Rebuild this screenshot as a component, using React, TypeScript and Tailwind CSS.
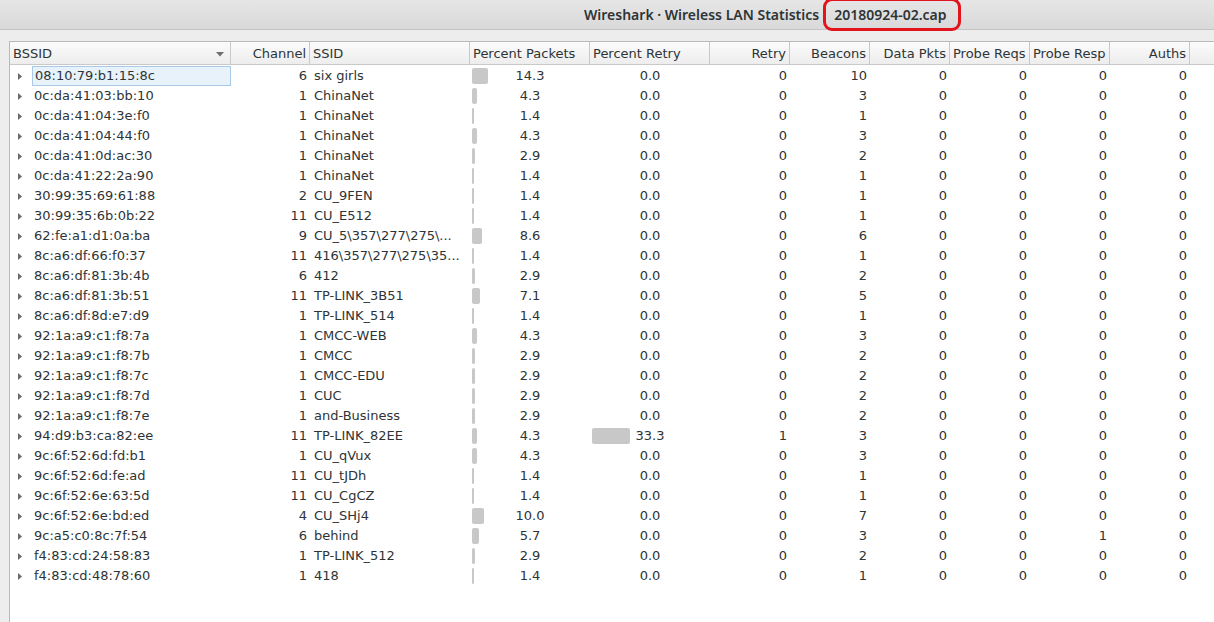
import React from "react";

type Row = [string, number, string, number, number, number, number, number, number, number, number];

const rows: Row[] = [
  ["08:10:79:b1:15:8c", 6, "six girls", 14.3, 0.0, 0, 10, 0, 0, 0, 0],
  ["0c:da:41:03:bb:10", 1, "ChinaNet", 4.3, 0.0, 0, 3, 0, 0, 0, 0],
  ["0c:da:41:04:3e:f0", 1, "ChinaNet", 1.4, 0.0, 0, 1, 0, 0, 0, 0],
  ["0c:da:41:04:44:f0", 1, "ChinaNet", 4.3, 0.0, 0, 3, 0, 0, 0, 0],
  ["0c:da:41:0d:ac:30", 1, "ChinaNet", 2.9, 0.0, 0, 2, 0, 0, 0, 0],
  ["0c:da:41:22:2a:90", 1, "ChinaNet", 1.4, 0.0, 0, 1, 0, 0, 0, 0],
  ["30:99:35:69:61:88", 2, "CU_9FEN", 1.4, 0.0, 0, 1, 0, 0, 0, 0],
  ["30:99:35:6b:0b:22", 11, "CU_E512", 1.4, 0.0, 0, 1, 0, 0, 0, 0],
  ["62:fe:a1:d1:0a:ba", 9, "CU_5\\357\\277\\275\\...", 8.6, 0.0, 0, 6, 0, 0, 0, 0],
  ["8c:a6:df:66:f0:37", 11, "416\\357\\277\\275\\35...", 1.4, 0.0, 0, 1, 0, 0, 0, 0],
  ["8c:a6:df:81:3b:4b", 6, "412", 2.9, 0.0, 0, 2, 0, 0, 0, 0],
  ["8c:a6:df:81:3b:51", 11, "TP-LINK_3B51", 7.1, 0.0, 0, 5, 0, 0, 0, 0],
  ["8c:a6:df:8d:e7:d9", 1, "TP-LINK_514", 1.4, 0.0, 0, 1, 0, 0, 0, 0],
  ["92:1a:a9:c1:f8:7a", 1, "CMCC-WEB", 4.3, 0.0, 0, 3, 0, 0, 0, 0],
  ["92:1a:a9:c1:f8:7b", 1, "CMCC", 2.9, 0.0, 0, 2, 0, 0, 0, 0],
  ["92:1a:a9:c1:f8:7c", 1, "CMCC-EDU", 2.9, 0.0, 0, 2, 0, 0, 0, 0],
  ["92:1a:a9:c1:f8:7d", 1, "CUC", 2.9, 0.0, 0, 2, 0, 0, 0, 0],
  ["92:1a:a9:c1:f8:7e", 1, "and-Business", 2.9, 0.0, 0, 2, 0, 0, 0, 0],
  ["94:d9:b3:ca:82:ee", 11, "TP-LINK_82EE", 4.3, 33.3, 1, 3, 0, 0, 0, 0],
  ["9c:6f:52:6d:fd:b1", 1, "CU_qVux", 4.3, 0.0, 0, 3, 0, 0, 0, 0],
  ["9c:6f:52:6d:fe:ad", 11, "CU_tJDh", 1.4, 0.0, 0, 1, 0, 0, 0, 0],
  ["9c:6f:52:6e:63:5d", 11, "CU_CgCZ", 1.4, 0.0, 0, 1, 0, 0, 0, 0],
  ["9c:6f:52:6e:bd:ed", 4, "CU_SHj4", 10.0, 0.0, 0, 7, 0, 0, 0, 0],
  ["9c:a5:c0:8c:7f:54", 6, "behind", 5.7, 0.0, 0, 3, 0, 0, 1, 0],
  ["f4:83:cd:24:58:83", 1, "TP-LINK_512", 2.9, 0.0, 0, 2, 0, 0, 0, 0],
  ["f4:83:cd:48:78:60", 1, "418", 1.4, 0.0, 0, 1, 0, 0, 0, 0],
];

const font = { fontFamily: '"DejaVu Sans", sans-serif' };
const titleFont = { fontFamily: '"Noto Sans", sans-serif' };

function Bar({ pct }: { pct: number }) {
  const w = Math.max(2, Math.round((pct / 100) * 115));
  return (
    <div
      className="absolute left-[2px] top-[2px] h-[16px] rounded-[2px] bg-[#c8c8c8]"
      style={{ width: w }}
    />
  );
}

function HeadCell({
  w,
  children,
  align = "left",
}: {
  w: string;
  children?: React.ReactNode;
  align?: "left" | "right";
}) {
  return (
    <div
      className={`${w} shrink-0 h-full flex items-center border-r border-[#c9c9c9] px-[3px] pt-[2px] whitespace-nowrap overflow-hidden ${
        align === "right" ? "justify-end" : "justify-start"
      }`}
    >
      {children}
    </div>
  );
}

export default function App() {
  return (
    <div className="w-[1214px] h-[622px] overflow-hidden bg-[#ededed] text-[#2e3436]" style={font}>
      {/* title bar */}
      <div className="h-[30px] bg-gradient-to-b from-[#e6e6e6] to-[#d9d9d9] border-b border-[#c4c4c4] flex items-center pl-[584px]">
        <span className="text-[14px] font-semibold text-[#2e3436] whitespace-nowrap" style={titleFont}>
          Wireshark · Wireless LAN Statistics
        </span>
        <span className="relative ml-[15px] text-[14px] font-semibold text-[#2e3436] whitespace-nowrap" style={titleFont}>
          20180924-02.cap
          <span className="absolute -left-[11px] -right-[14px] -top-[6px] -bottom-[6px] border-[3px] border-[#e3131c] rounded-[9px]" />
        </span>
      </div>

      {/* body */}
      <div className="pl-[9px] pt-[11px] h-[592px]">
        <div className="h-full bg-white border-l border-t border-[#b9b9b9] text-[13px]">
          {/* header */}
          <div className="h-[23px] flex bg-gradient-to-b from-[#fbfbfb] to-[#ededed] border-b border-[#c9c9c9] text-[#2e3436]">
            <div className="w-[221px] shrink-0 h-full flex items-center justify-between border-r border-[#c9c9c9] pl-[3px] pr-[6px] pt-[2px]">
              <span>BSSID</span>
              <svg width="8" height="5" viewBox="0 0 8 5">
                <path d="M0 0 L8 0 L4 4.5 Z" fill="#6e6e6e" />
              </svg>
            </div>
            <HeadCell w="w-[79px]" align="right">Channel</HeadCell>
            <HeadCell w="w-[160px]">SSID</HeadCell>
            <HeadCell w="w-[120px]">Percent Packets</HeadCell>
            <HeadCell w="w-[120px]">Percent Retry</HeadCell>
            <HeadCell w="w-[80px]" align="right">Retry</HeadCell>
            <HeadCell w="w-[80px]" align="right">Beacons</HeadCell>
            <HeadCell w="w-[80px]" align="right">Data Pkts</HeadCell>
            <HeadCell w="w-[80px]">Probe Reqs</HeadCell>
            <HeadCell w="w-[80px]">Probe Resp</HeadCell>
            <HeadCell w="w-[80px]" align="right">Auths</HeadCell>
            <div className="flex-1" />
          </div>

          {/* rows */}
          <div className="pt-[1px]">
            {rows.map((r, i) => (
              <div key={i} className="h-[20px] flex items-center whitespace-nowrap">
                <div className="w-[221px] shrink-0 h-full flex items-center">
                  <div className="w-[22px] shrink-0 flex items-center pl-[8px]">
                    <svg width="4" height="7" viewBox="0 0 4 7">
                      <path d="M0 0 L4 3.5 L0 7 Z" fill="#6b6b6b" />
                    </svg>
                  </div>
                  <div
                    className={`h-full flex-1 flex items-center pl-[2px] ${
                      i === 0 ? "bg-[#e8f2fb] border border-[#a9c9e6] pl-[1px]" : ""
                    }`}
                  >
                    {r[0]}
                  </div>
                </div>
                <div className="w-[79px] shrink-0 text-right pr-[3px]">{r[1]}</div>
                <div className="w-[160px] shrink-0 pl-[4px] overflow-hidden">{r[2]}</div>
                <div className="w-[120px] shrink-0 h-full relative flex items-center justify-center">
                  <Bar pct={r[3]} />
                  <span className="relative">{r[3].toFixed(1)}</span>
                </div>
                <div className="w-[120px] shrink-0 h-full relative flex items-center justify-center">
                  {r[4] > 0 && <Bar pct={r[4]} />}
                  <span className="relative">{r[4].toFixed(1)}</span>
                </div>
                <div className="w-[80px] shrink-0 text-right pr-[3px]">{r[5]}</div>
                <div className="w-[80px] shrink-0 text-right pr-[3px]">{r[6]}</div>
                <div className="w-[80px] shrink-0 text-right pr-[3px]">{r[7]}</div>
                <div className="w-[80px] shrink-0 text-right pr-[3px]">{r[8]}</div>
                <div className="w-[80px] shrink-0 text-right pr-[3px]">{r[9]}</div>
                <div className="w-[80px] shrink-0 text-right pr-[3px]">{r[10]}</div>
              </div>
            ))}
          </div>
        </div>
      </div>
    </div>
  );
}
